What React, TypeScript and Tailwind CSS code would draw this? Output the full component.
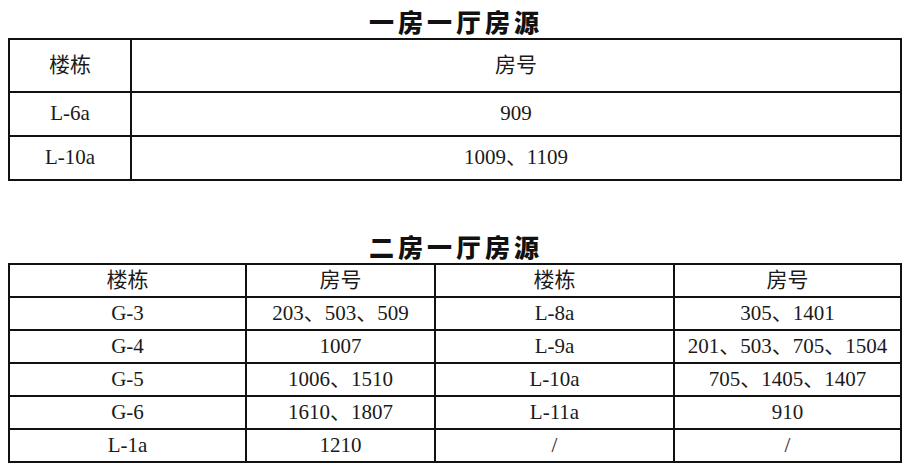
const oneRoom = [
  ["L-6a", "909"],
  ["L-10a", "1009、1109"],
];

const twoRoom = [
  ["G-3", "203、503、509", "L-8a", "305、1401"],
  ["G-4", "1007", "L-9a", "201、503、705、1504"],
  ["G-5", "1006、1510", "L-10a", "705、1405、1407"],
  ["G-6", "1610、1807", "L-11a", "910"],
  ["L-1a", "1210", "/", "/"],
];

function Title({ children, className }: { children: string; className: string }) {
  return (
    <div className={`flex items-end justify-center pb-[4px] ${className}`}>
      <h2 className="font-['Noto_Sans_CJK_SC',sans-serif] text-[25px] leading-none font-black tracking-[4px] text-[#111]">
        {children}
      </h2>
    </div>
  );
}

export default function App() {
  return (
    <div className="w-[912px] h-[470px] bg-white font-['Liberation_Serif','Noto_Sans_CJK_SC',serif] text-[21px] text-[#1a1a1a]">
      <Title className="h-[38px]">一房一厅房源</Title>

      <div className="ml-2 w-[894px] border-2 border-[#111]">
        <div className="grid grid-cols-[122px_1fr] h-[53px] border-b-2 border-[#111]">
          <div className="flex items-center justify-center border-r-2 border-[#111]">楼栋</div>
          <div className="flex items-center justify-center">房号</div>
        </div>
        {oneRoom.map(([b, r], i) => (
          <div
            key={b}
            className={`grid grid-cols-[122px_1fr] ${
              i < oneRoom.length - 1 ? "h-[44px] border-b-2 border-[#111]" : "h-[42px]"
            }`}
          >
            <div className="flex items-center justify-center border-r-2 border-[#111]">{b}</div>
            <div className="flex items-center justify-center">{r}</div>
          </div>
        ))}
      </div>

      <Title className="h-[82px]">二房一厅房源</Title>

      <div className="ml-2 w-[894px] border-2 border-[#111]">
        {[["楼栋", "房号", "楼栋", "房号"], ...twoRoom].map((row, i, all) => (
          <div
            key={i}
            className={`grid grid-cols-[237px_189px_239px_1fr] ${
              i < all.length - 1 ? "h-[33px] border-b-2 border-[#111]" : "h-[31px]"
            }`}
          >
            {row.map((cell, j) => (
              <div
                key={j}
                className={`flex items-center justify-center whitespace-nowrap ${
                  j < 3 ? "border-r-2 border-[#111]" : ""
                }`}
              >
                {cell}
              </div>
            ))}
          </div>
        ))}
      </div>
    </div>
  );
}
